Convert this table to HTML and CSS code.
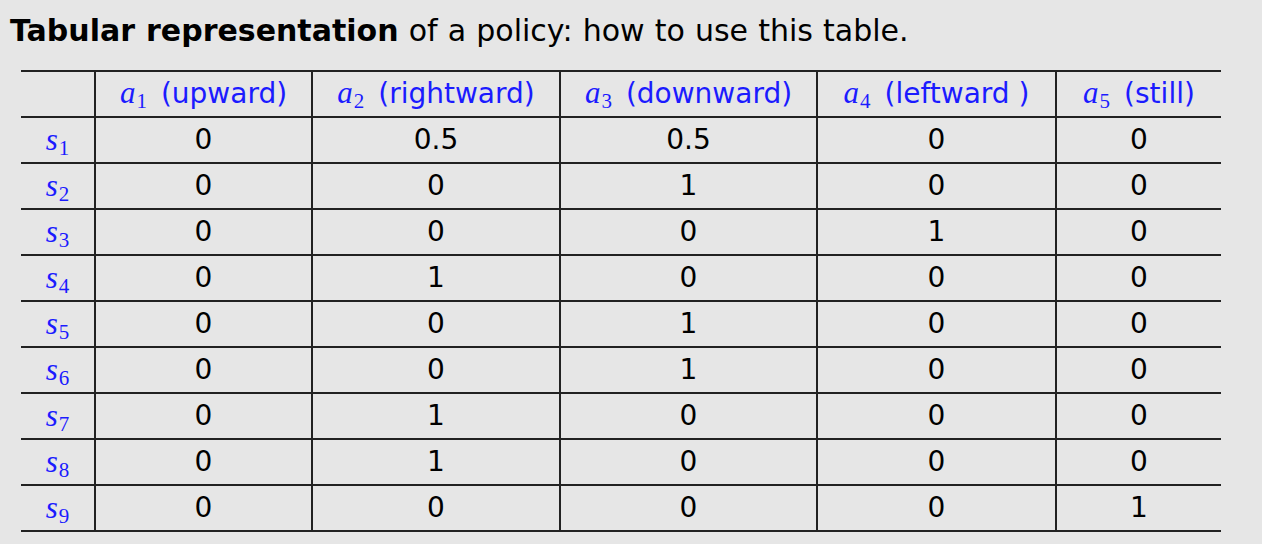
FILE: index.html
```html
<!DOCTYPE html>
<html>
<head>
<meta charset="utf-8">
<link rel="stylesheet" href="styles.css">
</head>
<body>
<div class="page">
  <h1 class="title"><b>Tabular representation</b> of a policy: how to use this table.</h1>
  <div class="grid">
    <div class="cell hd c0"></div>
    <div class="cell hd"><span class="m">a<sub>1</sub></span> (upward)</div>
    <div class="cell hd"><span class="m">a<sub>2</sub></span> (rightward)</div>
    <div class="cell hd"><span class="m">a<sub>3</sub></span> (downward)</div>
    <div class="cell hd"><span class="m">a<sub>4</sub></span> (leftward )</div>
    <div class="cell hd last"><span class="m">a<sub>5</sub></span> (still)</div>

    <div class="cell c0"><span class="m">s<sub>1</sub></span></div><div class="cell">0</div><div class="cell">0.5</div><div class="cell">0.5</div><div class="cell">0</div><div class="cell last">0</div>
    <div class="cell c0"><span class="m">s<sub>2</sub></span></div><div class="cell">0</div><div class="cell">0</div><div class="cell">1</div><div class="cell">0</div><div class="cell last">0</div>
    <div class="cell c0"><span class="m">s<sub>3</sub></span></div><div class="cell">0</div><div class="cell">0</div><div class="cell">0</div><div class="cell">1</div><div class="cell last">0</div>
    <div class="cell c0"><span class="m">s<sub>4</sub></span></div><div class="cell">0</div><div class="cell">1</div><div class="cell">0</div><div class="cell">0</div><div class="cell last">0</div>
    <div class="cell c0"><span class="m">s<sub>5</sub></span></div><div class="cell">0</div><div class="cell">0</div><div class="cell">1</div><div class="cell">0</div><div class="cell last">0</div>
    <div class="cell c0"><span class="m">s<sub>6</sub></span></div><div class="cell">0</div><div class="cell">0</div><div class="cell">1</div><div class="cell">0</div><div class="cell last">0</div>
    <div class="cell c0"><span class="m">s<sub>7</sub></span></div><div class="cell">0</div><div class="cell">1</div><div class="cell">0</div><div class="cell">0</div><div class="cell last">0</div>
    <div class="cell c0"><span class="m">s<sub>8</sub></span></div><div class="cell">0</div><div class="cell">1</div><div class="cell">0</div><div class="cell">0</div><div class="cell last">0</div>
    <div class="cell c0"><span class="m">s<sub>9</sub></span></div><div class="cell">0</div><div class="cell">0</div><div class="cell">0</div><div class="cell">0</div><div class="cell last">1</div>
  </div>
</div>
</body>
</html>
```
FILE: styles.css
```css
html, body {
  margin: 0;
  padding: 0;
  background: #e6e6e6;
}
.page {
  width: 1262px;
  height: 544px;
  padding: 11px 0 0 10px;
  box-sizing: border-box;
  font-family: "DejaVu Sans", sans-serif;
  color: #000;
}
.title {
  margin: 0;
  font-size: 30px;
  font-weight: normal;
  line-height: 40px;
  word-spacing: 0.6px;
}
.title b { font-weight: bold; }
.grid {
  margin: 19px 0 0 11px;
  width: 1200px;
  display: grid;
  grid-template-columns: 75px 217px 248px 257px 239px 164px;
  grid-auto-rows: 46px;
  border-top: 2px solid #222;
}
.cell {
  border-bottom: 2px solid #222;
  border-right: 2px solid #222;
  display: flex;
  align-items: center;
  justify-content: center;
  font-size: 28px;
  box-sizing: border-box;
  padding-bottom: 2px;
}
.cell.last { border-right: none; }
.hd { color: #1b1bff; }
.m {
  font-family: "Liberation Serif", serif;
  font-style: italic;
  font-size: 31px;
  color: #1b1bff;
  margin-right: 14px;
}
.c0 .m { margin-right: 0; padding-top: 2px; }
.m sub {
  font-style: normal;
  font-size: 21px;
  vertical-align: -5px;
  line-height: 0;
  margin-left: 1px;
}
```
